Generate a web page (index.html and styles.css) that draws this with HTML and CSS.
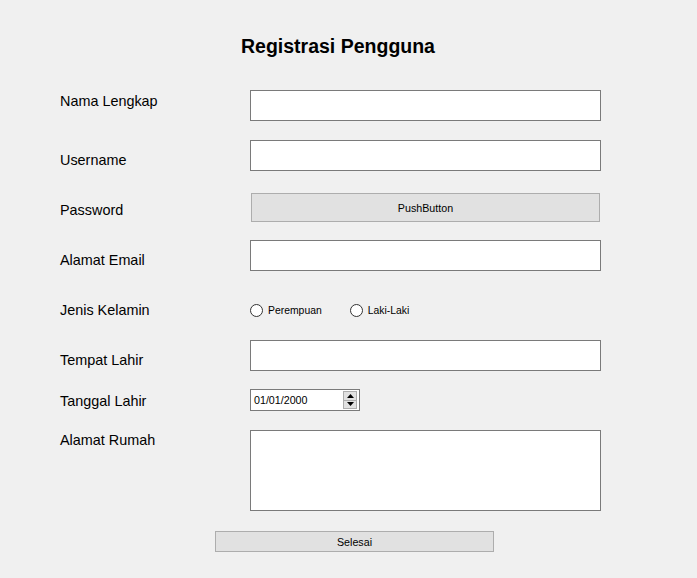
FILE: index.html
```html
<!DOCTYPE html>
<html>
<head>
<meta charset="utf-8">
<link rel="stylesheet" href="styles.css">
</head>
<body>
<div class="window">
  <h1 class="title">Registrasi Pengguna</h1>
  <div class="form">
    <div class="row r1">
      <label class="lbl l1">Nama Lengkap</label>
      <div class="input"></div>
    </div>
    <div class="row r2">
      <label class="lbl l10">Username</label>
      <div class="input"></div>
    </div>
    <div class="row r3">
      <label class="lbl l7">Password</label>
      <button class="btn wide">PushButton</button>
    </div>
    <div class="row r4">
      <label class="lbl l10">Alamat Email</label>
      <div class="input"></div>
    </div>
    <div class="row r5">
      <label class="lbl">Jenis Kelamin</label>
      <div class="radios">
        <span class="radio"><span class="circle"></span>Perempuan</span>
        <span class="radio"><span class="circle"></span>Laki-Laki</span>
      </div>
    </div>
    <div class="row r6">
      <label class="lbl l10">Tempat Lahir</label>
      <div class="input"></div>
    </div>
    <div class="row r7">
      <label class="lbl l2">Tanggal Lahir</label>
      <div class="date">
        <span class="date-text">01/01/2000</span>
        <span class="spin">
          <span class="spin-btn"><svg width="7" height="4" viewBox="0 0 7 4"><path d="M0 4 L3.5 0 L7 4 Z" fill="#000"/></svg></span>
          <span class="spin-btn"><svg width="7" height="4" viewBox="0 0 7 4"><path d="M0 0 L3.5 4 L7 0 Z" fill="#000"/></svg></span>
        </span>
      </div>
    </div>
    <div class="row r8">
      <label class="lbl">Alamat Rumah</label>
      <div class="textarea"></div>
    </div>
  </div>
  <div class="footer">
    <button class="btn done">Selesai</button>
  </div>
</div>
</body>
</html>
```

FILE: styles.css
```css
html, body {
  margin: 0;
  padding: 0;
  background: #f0f0f0;
}
.window {
  width: 697px;
  height: 578px;
  background: #f0f0f0;
  font-family: "Liberation Sans", Arial, sans-serif;
  color: #000;
  box-sizing: border-box;
  padding-top: 34px;
}
.title {
  margin: 0 0 0 241px;
  font-size: 19.5px;
  line-height: 24px;
  font-weight: bold;
}
.form {
  padding-left: 60px;
  margin-top: 32px;
  display: flex;
  flex-direction: column;
}
.row {
  display: flex;
  align-items: flex-start;
}
.r2 { margin-top: 19px; }
.r3 { margin-top: 22px; }
.r4 { margin-top: 18px; }
.r5 { margin-top: 29px; }
.r6 { margin-top: 19px; }
.r7 { margin-top: 18px; }
.r8 { margin-top: 19px; }
.lbl {
  width: 190px;
  flex: none;
  font-size: 14.4px;
  line-height: 20px;
}
.l1 { margin-top: 1px; }
.l2 { margin-top: 2px; }
.l7 { margin-top: 7px; }
.l10 { margin-top: 10px; }
.input {
  width: 351px;
  height: 31px;
  box-sizing: border-box;
  border: 1px solid #7a7a7a;
  background: #fff;
}
.textarea {
  width: 351px;
  height: 81px;
  box-sizing: border-box;
  border: 1px solid #7a7a7a;
  background: #fff;
}
.btn {
  box-sizing: border-box;
  border: 1px solid #adadad;
  background: #e1e1e1;
  font-family: "Liberation Sans", Arial, sans-serif;
  font-size: 10.7px;
  color: #000;
  padding: 0;
  margin: 0;
}
.wide {
  width: 349px;
  height: 29px;
  margin-left: 1px;
  margin-top: 0;
}
.radios {
  display: flex;
  align-items: center;
  height: 21px;
  font-size: 10.4px;
  line-height: 21px;
}
.radio {
  display: flex;
  align-items: center;
}
.radio + .radio { margin-left: 28px; }
.circle {
  width: 11px;
  height: 11px;
  border: 1px solid #333;
  border-radius: 50%;
  background: #fff;
  margin: 0 5px 0 0;
}
.date {
  width: 110px;
  height: 22px;
  box-sizing: border-box;
  border: 1px solid #7a7a7a;
  background: #fff;
  display: flex;
  align-items: center;
  justify-content: space-between;
  padding: 0 1px 0 3px;
}
.date-text {
  font-size: 10.7px;
}
.spin {
  display: flex;
  flex-direction: column;
  width: 14px;
  height: 18px;
  box-sizing: border-box;
  border: 1px solid #adadad;
  background: #e1e1e1;
  margin-right: 1px;
}
.spin-btn {
  flex: 1;
  display: flex;
  align-items: center;
  justify-content: center;
}
.spin-btn + .spin-btn { border-top: 1px solid #adadad; }
.footer {
  padding-left: 215px;
  margin-top: 20px;
}
.done {
  width: 279px;
  height: 21px;
}
```
